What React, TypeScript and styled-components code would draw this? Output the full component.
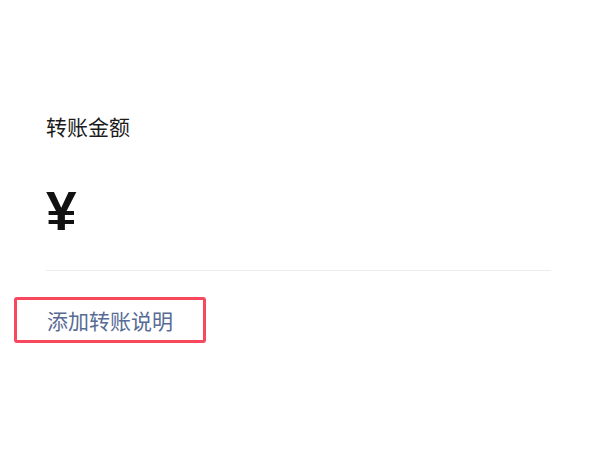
import React from 'react';
import styled, { createGlobalStyle } from 'styled-components';

const GlobalStyle = createGlobalStyle`
  html, body {
    margin: 0;
    padding: 0;
    background: #ffffff;
  }
  body {
    font-family: "Noto Sans CJK SC", "Noto Sans", sans-serif;
  }
`;

const Page = styled.div`
  width: 600px;
  height: 450px;
  padding-top: 84px;
  box-sizing: border-box;
  overflow: hidden;
`;

const Card = styled.div`
  margin: 0 1px;
  padding: 28px 48px 0 45px;
  border-radius: 6px 6px 0 0;
  height: 100%;
`;

const Label = styled.div`
  font-size: 21px;
  line-height: 28px;
  color: #1b1b1b;
`;

const AmountRow = styled.div`
  display: flex;
  align-items: center;
  height: 70px;
  margin-top: 36px;
  border-bottom: 1px solid #ececec;
  padding-bottom: 24px;
`;

const Currency = styled.span`
  font-family: "Liberation Sans", "Noto Sans", sans-serif;
  font-size: 55px;
  font-weight: 700;
  line-height: 1;
  color: #111111;
`;

const NoteLink = styled.div`
  display: inline-block;
  margin: 26px 0 0 -32px;
  padding: 6px 30px 6px 30px;
  border: 3px solid #f7485e;
  border-radius: 3px;
  font-size: 21px;
  line-height: 28px;
  color: #576b95;
`;

export default function App() {
  return (
    <>
      <GlobalStyle />
      <Page>
        <Card>
          <Label>转账金额</Label>
          <AmountRow>
            <Currency>¥</Currency>
          </AmountRow>
          <NoteLink>添加转账说明</NoteLink>
        </Card>
      </Page>
    </>
  );
}
